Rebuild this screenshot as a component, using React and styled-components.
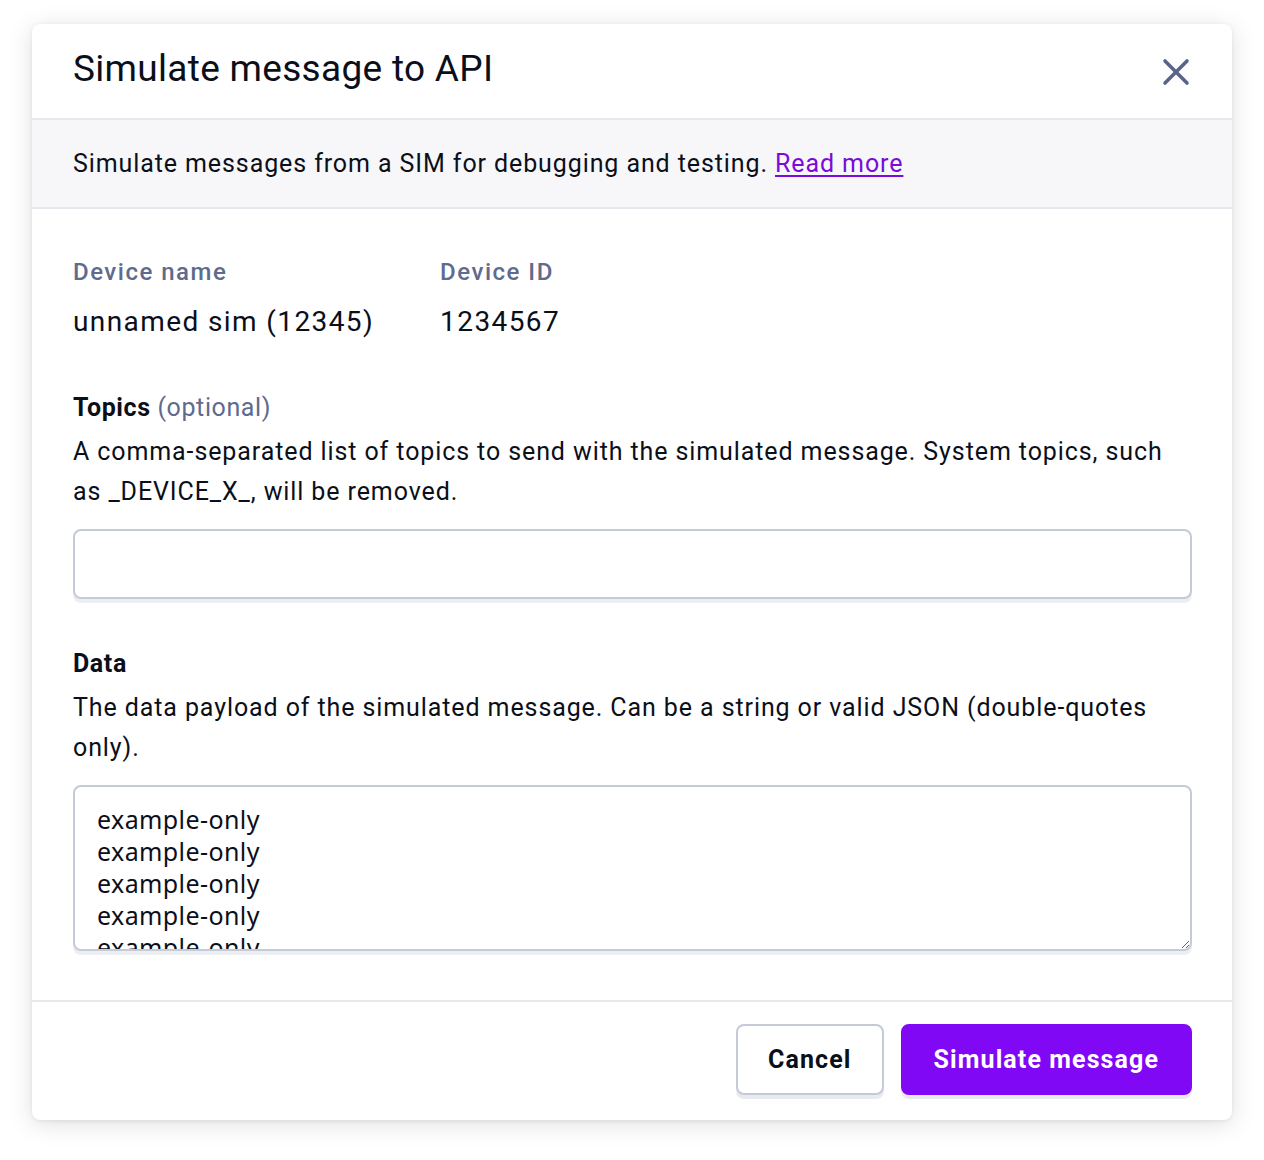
import React from "react";
import styled, { createGlobalStyle } from "styled-components";

const GlobalStyle = createGlobalStyle`
  body {
    margin: 0;
    background: #ffffff;
    font-family: Roboto, "Liberation Sans", sans-serif;
    color: #0b0f1a;
  }
`;

const CloseIcon = () => (
  <svg width="30" height="30" viewBox="0 0 30 30" fill="none">
    <path
      d="M4 4 L26 26 M26 4 L4 26"
      stroke="#5a6488"
      strokeWidth="3.6"
      strokeLinecap="round"
    />
  </svg>
);

const App = () => {
  return (
    <Page>
      <GlobalStyle />
      <Modal>
        <Header>
          <Title>Simulate message to API</Title>
          <CloseButton aria-label="Close">
            <CloseIcon />
          </CloseButton>
        </Header>
        <Banner>
          Simulate messages from a SIM for debugging and testing.&nbsp;
          <Link href="#">Read more</Link>
        </Banner>
        <Body>
          <DeviceRow>
            <DeviceCol>
              <MetaLabel>Device name</MetaLabel>
              <MetaValue>unnamed sim (12345)</MetaValue>
            </DeviceCol>
            <DeviceCol>
              <MetaLabel>Device ID</MetaLabel>
              <MetaValue>1234567</MetaValue>
            </DeviceCol>
          </DeviceRow>

          <Field>
            <FieldLabel>
              Topics <Optional>(optional)</Optional>
            </FieldLabel>
            <Help>
              A comma-separated list of topics to send with the simulated
              message. System topics, such as _DEVICE_X_, will be removed.
            </Help>
            <TextInput type="text" />
          </Field>

          <Field $last>
            <FieldLabel>Data</FieldLabel>
            <Help>
              The data payload of the simulated message. Can be a string or
              valid JSON (double-quotes only).
            </Help>
            <TextArea
              defaultValue={
                "example-only\nexample-only\nexample-only\nexample-only\nexample-only\nexample-only"
              }
            />
          </Field>
        </Body>
        <Footer>
          <Button>Cancel</Button>
          <Button $primary>Simulate message</Button>
        </Footer>
      </Modal>
    </Page>
  );
};

const Page = styled.div`
  padding: 24px 32px 40px;
`;

const Modal = styled.div`
  width: 1200px;
  background: #fff;
  border-radius: 8px;
  box-shadow: 0 4px 24px rgba(20, 24, 40, 0.13), 0 1px 4px rgba(20, 24, 40, 0.08);
  overflow: hidden;
`;

const Header = styled.div`
  height: 94px;
  display: flex;
  align-items: center;
  justify-content: space-between;
  padding: 0 40px 0 41px;
  border-bottom: 2px solid #e6e8ee;
`;

const Title = styled.h1`
  margin: 0;
  font-size: 37px;
  font-weight: 400;
  line-height: 44px;
  letter-spacing: 0.3px;
  color: #0b0f1a;
  padding-bottom: 4px;
`;

const CloseButton = styled.button`
  border: none;
  background: none;
  padding: 0;
  margin-right: 1px;
  margin-top: 2px;
  display: flex;
  cursor: pointer;
`;

const Banner = styled.div`
  height: 87px;
  display: flex;
  align-items: center;
  padding: 0 41px;
  background: #f7f7f9;
  border-bottom: 2px solid #e6e8ee;
  font-size: 25px;
  letter-spacing: 0.9px;
`;

const Link = styled.a`
  color: #7a0bd9;
  text-decoration: underline;
  text-underline-offset: 3px;
`;

const Body = styled.div`
  padding: 47px 40px 49px 41px;
`;

const DeviceRow = styled.div`
  display: flex;
  gap: 66px;
`;

const DeviceCol = styled.div`
  display: flex;
  flex-direction: column;
  gap: 16px;
`;

const MetaLabel = styled.div`
  font-size: 24px;
  font-weight: 500;
  line-height: 32px;
  color: #5e6a8e;
  letter-spacing: 1.5px;
`;

const MetaValue = styled.div`
  font-size: 28px;
  line-height: 36px;
  letter-spacing: 1.4px;
  color: #0b0f1a;
`;

const Field = styled.div`
  margin-top: ${({ $last }) => ($last ? "49px" : "52px")};
  display: flex;
  flex-direction: column;
`;

const FieldLabel = styled.div`
  font-size: 25px;
  font-weight: 700;
  line-height: 32px;
  letter-spacing: 0.6px;
`;

const Optional = styled.span`
  font-weight: 400;
  color: #5e6a8e;
`;

const Help = styled.p`
  margin: 8px 0 17px;
  font-size: 25px;
  line-height: 40px;
  letter-spacing: 0.9px;
  max-width: 1110px;
`;

const TextInput = styled.input`
  box-sizing: border-box;
  width: 100%;
  height: 70px;
  border: 2px solid #c5cad8;
  border-radius: 8px;
  box-shadow: 0 4px 0 #eceef2;
  font-size: 25px;
  padding: 0 22px;
  outline: none;
`;

const TextArea = styled.textarea`
  box-sizing: border-box;
  width: 100%;
  height: 166px;
  border: 2px solid #c5cad8;
  border-radius: 8px;
  box-shadow: 0 4px 0 #eceef2;
  font-family: "Noto Sans", "Open Sans", sans-serif;
  font-size: 25px;
  line-height: 32px;
  letter-spacing: 0.4px;
  padding: 16px 22px;
  color: #0b0f1a;
  outline: none;
  overflow: hidden;
`;

const Footer = styled.div`
  display: flex;
  justify-content: flex-end;
  gap: 17px;
  padding: 22px 40px 25px;
  border-top: 2px solid #e6e8ee;
`;

const Button = styled.button`
  box-sizing: border-box;
  height: 71px;
  padding: 0 ${({ $primary }) => ($primary ? "31px" : "30px")};
  border-radius: 8px;
  font-family: Roboto, "Liberation Sans", sans-serif;
  font-size: 25px;
  font-weight: 700;
  letter-spacing: 1.1px;
  cursor: pointer;
  border: 2px solid ${({ $primary }) => ($primary ? "#8108f5" : "#c5cad8")};
  background: ${({ $primary }) => ($primary ? "#8108f5" : "#ffffff")};
  color: ${({ $primary }) => ($primary ? "#ffffff" : "#0b0f1a")};
  box-shadow: 0 4px 0 #e9eaef;
`;

export default App;
